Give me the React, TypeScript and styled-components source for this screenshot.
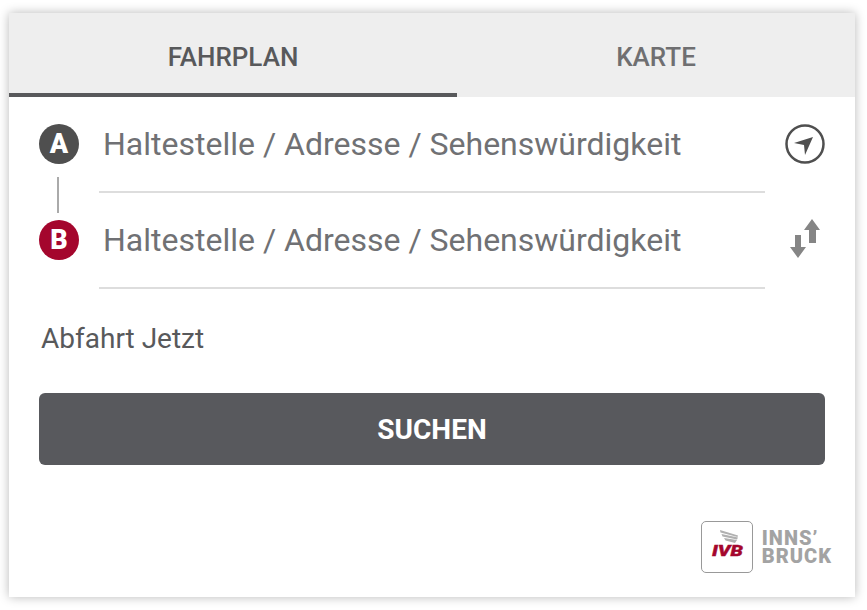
import styled, { createGlobalStyle } from 'styled-components';

const GlobalStyle = createGlobalStyle`
  html, body {
    margin: 0;
    padding: 0;
    background: #fff;
    font-family: Roboto, "Liberation Sans", sans-serif;
  }
  * { box-sizing: border-box; }
`;

const Page = styled.div`
  padding: 13px 12px 13px 9px;
  width: 867px;
  height: 610px;
`;

const Card = styled.div`
  height: 584px;
  background: #fff;
  box-shadow: 0 0 10px rgba(0, 0, 0, 0.28);
  display: flex;
  flex-direction: column;
`;

const Tabs = styled.div`
  display: flex;
  height: 84px;
  background: #eee;
`;

const Tab = styled.div<{ $active?: boolean }>`
  width: ${(p) => (p.$active ? '448px' : '398px')};
  display: flex;
  align-items: center;
  justify-content: center;
  padding-top: 8px;
  border-bottom: 4px solid ${(p) => (p.$active ? '#58595b' : 'transparent')};
  color: ${(p) => (p.$active ? '#58595b' : '#6f6f71')};
  font-size: 26px;
  font-weight: 500;
`;

const Body = styled.div`
  flex: 1;
  display: flex;
  flex-direction: column;
  padding: 0 30px;
`;

const Row = styled.div`
  display: flex;
  height: 96px;
  position: relative;
`;

const Badge = styled.div<{ $color: string }>`
  width: 40px;
  height: 40px;
  margin-top: 27px;
  border-radius: 50%;
  flex: none;
  background: ${(p) => p.$color};
  color: #fff;
  font-size: 27px;
  font-weight: 900;
  display: flex;
  align-items: center;
  justify-content: center;
`;

const Connector = styled.div`
  position: absolute;
  left: 18px;
  top: 80px;
  width: 2px;
  height: 36px;
  background: #aaa;
`;

const Field = styled.div`
  width: 666px;
  margin-left: 20px;
  border-bottom: 2px solid #ddd;
  padding: 26px 0 0 4px;
  color: #707174;
  font-size: 32px;
  line-height: 42px;
`;

const IconSlot = styled.div<{ $top: number }>`
  margin-left: auto;
  width: 40px;
  padding-top: ${(p) => p.$top}px;
  display: flex;
  justify-content: center;
`;

const Departure = styled.div`
  margin-top: 32px;
  padding-left: 2px;
  color: #58595b;
  font-size: 28px;
  line-height: 36px;
`;

const SearchButton = styled.button`
  margin-top: 36px;
  height: 72px;
  border: 0;
  border-radius: 6px;
  background: #58595d;
  color: #fff;
  font-family: inherit;
  font-size: 28px;
  font-weight: 700;
`;

const Footer = styled.div`
  margin-top: auto;
  padding: 0 0 24px;
  margin-right: -7px;
  display: flex;
  justify-content: flex-end;
  align-items: center;
  gap: 9px;
`;

const LogoBox = styled.div`
  width: 52px;
  height: 52px;
  border: 1px solid #999;
  border-radius: 5px;
`;

const Wordmark = styled.div`
  color: #a3a3a3;
  font-size: 20px;
  line-height: 18px;
  font-weight: 900;
  letter-spacing: 1px;
`;

const LocateIcon = () => (
  <svg width="40" height="40" viewBox="0 0 40 40">
    <circle cx="20" cy="20" r="18.5" fill="none" stroke="#4f4f4f" strokeWidth="2.5" />
    <path d="M9 19 L28 13 L20 31 L19 21 Z" fill="#4f4f4f" />
  </svg>
);

const SwapIcon = () => (
  <svg width="30" height="40" viewBox="0 0 30 40">
    <path d="M14 11 H19 V24 H26 V11 H30 L22 0 Z" fill="#858585" />
    <path d="M5 16 H11 V28 H16 L8 39 L0 28 H5 Z" fill="#858585" />
  </svg>
);

const IvbLogo = () => (
  <svg width="50" height="50" viewBox="0 0 50 50">
    <path d="M18 8 L36 13.5 L35.5 15 L18.5 10.5 Z M19.5 12 L36 15.5 L35 17.5 L20.5 14.5 Z M22 16 L35 18 L33 21 L23.5 18.5 Z" fill="#b0b0b0" />
    <text x="10" y="34" fontFamily="Roboto, sans-serif" fontSize="15.5" fontWeight="900" fontStyle="italic" fill="#a4062d" stroke="#a4062d" strokeWidth="0.4" textLength="31" lengthAdjust="spacingAndGlyphs">
      IVB
    </text>
  </svg>
);

export default function App() {
  return (
    <Page>
      <GlobalStyle />
      <Card>
        <Tabs>
          <Tab $active>FAHRPLAN</Tab>
          <Tab>KARTE</Tab>
        </Tabs>
        <Body>
          <Row>
            <Badge $color="#4f4f4f">A</Badge>
            <Connector />
            <Field>Haltestelle / Adresse / Sehenswürdigkeit</Field>
            <IconSlot $top={27}>
              <LocateIcon />
            </IconSlot>
          </Row>
          <Row>
            <Badge $color="#a4062d">B</Badge>
            <Field>Haltestelle / Adresse / Sehenswürdigkeit</Field>
            <IconSlot $top={26}>
              <SwapIcon />
            </IconSlot>
          </Row>
          <Departure>Abfahrt Jetzt</Departure>
          <SearchButton>SUCHEN</SearchButton>
          <Footer>
            <LogoBox>
              <IvbLogo />
            </LogoBox>
            <Wordmark>
              INNS’
              <br />
              BRUCK
            </Wordmark>
          </Footer>
        </Body>
      </Card>
    </Page>
  );
}
